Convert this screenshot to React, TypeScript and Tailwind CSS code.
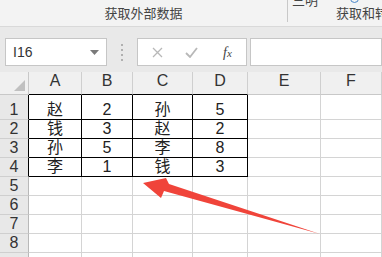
import React from "react"

const cols = [
  { name: "A", w: 53 },
  { name: "B", w: 51 },
  { name: "C", w: 60 },
  { name: "D", w: 55 },
  { name: "E", w: 73 },
  { name: "F", w: 61 },
]

const data = [
  ["赵", "2", "孙", "5"],
  ["钱", "3", "赵", "2"],
  ["孙", "5", "李", "8"],
  ["李", "1", "钱", "3"],
]

const rowHeights = [25, 19, 19, 19, 19, 19, 19, 19, 19]

export default function App() {
  return (
    <div className="relative w-[382px] h-[257px] overflow-hidden bg-white text-[#222]" style={{ fontFamily: '"Liberation Sans", "Noto Sans CJK SC", sans-serif' }}>
      {/* ribbon */}
      <div className="h-[27px] bg-[#f3f3f3] border-b border-[#d9d9d9] flex relative">
        <div className="w-[287px] shrink-0 flex items-end justify-center pb-[3px] text-[13px] text-[#444]">获取外部数据</div>
        <div className="w-px shrink-0 h-[22px] bg-[#c8c8c8]" />
        <div className="flex-1 min-w-0 flex flex-col pl-[48px]">
          <div className="h-[6px] relative">
            <span className="absolute -top-[9px] left-[-44px] text-[13px] text-[#444]">三明</span>
            <span className="absolute -top-[6px] left-[14px] w-[9px] h-[9px] rounded-full border border-[#4a86c8]" />
          </div>
          <div className="mt-auto pb-[3px] text-[13px] text-[#444] whitespace-nowrap">获取和转换</div>
        </div>
      </div>

      {/* formula bar */}
      <div className="h-[45px] bg-[#e9e9e9] flex items-start pt-[11px] pl-[5px]">
        <div className="w-[102px] shrink-0 h-[28px] bg-white border border-[#c6c6c6] flex items-center px-[7px] text-[14px] text-[#333]">
          <span className="flex-1">I16</span>
          <svg width="9" height="5" viewBox="0 0 9 5"><path d="M0 0h9L4.5 5z" fill="#7a7a7a" /></svg>
        </div>
        <div className="w-[30px] shrink-0 h-[28px] flex flex-col items-center justify-center gap-[3px]">
          <span className="w-[2px] h-[2px] bg-[#b0b0b0]" />
          <span className="w-[2px] h-[2px] bg-[#b0b0b0]" />
          <span className="w-[2px] h-[2px] bg-[#b0b0b0]" />
          <span className="w-[2px] h-[2px] bg-[#b0b0b0]" />
        </div>
        <div className="w-[110px] shrink-0 h-[28px] bg-white border border-[#c6c6c6] flex items-center">
          <svg className="ml-[14px]" width="11" height="11" viewBox="0 0 11 11"><path d="M1 1l9 9M10 1l-9 9" stroke="#b8b8b8" strokeWidth="1.3" /></svg>
          <svg className="ml-[22px]" width="13" height="11" viewBox="0 0 13 11"><path d="M1 6l4 4 7-9" stroke="#b8b8b8" strokeWidth="1.8" fill="none" /></svg>
          <span className="ml-[25px] text-[14px] italic text-[#444]" style={{ fontFamily: '"Liberation Serif", serif' }}>f<span className="text-[11px]">x</span></span>
        </div>
        <div className="ml-[3px] flex-1 h-[28px] bg-white border border-[#c6c6c6]" />
      </div>

      {/* sheet */}
      <div className="flex flex-col text-[16px]">
        <div className="flex h-[23px] bg-[#f0f0f0]">
          <div className="w-[29px] shrink-0 border-r border-b border-[#c8c8c8] relative">
            <svg className="absolute right-[3px] bottom-[3px]" width="11" height="11" viewBox="0 0 11 11"><path d="M11 0v11H0z" fill="#c0c0c0" /></svg>
          </div>
          {cols.map((c, i) => (
            <div
              key={c.name}
              style={{ width: c.w }}
              className={`shrink-0 flex items-end justify-center pb-[1px] text-[#333] border-r border-[#cfcfcf] border-b ${i < 4 ? "border-b-black" : "border-b-[#c8c8c8]"}`}
            >
              {c.name}
            </div>
          ))}
        </div>
        {rowHeights.map((h, r) => (
          <div key={r} className="flex" style={{ height: h }}>
            <div className={`w-[29px] shrink-0 bg-[#e8e8e8] border-b border-b-[#cfcfcf] border-r flex items-end justify-center text-[#333] leading-[19px] ${r < 4 ? "border-r-black" : "border-r-[#b8b8b8]"}`}>
              {r < 8 ? r + 1 : ""}
            </div>
            {cols.map((c, i) => {
              const inTable = r < 4 && i < 4
              return (
                <div
                  key={c.name}
                  style={{ width: c.w }}
                  className={`shrink-0 flex items-end justify-center leading-[19px] border-r border-b ${inTable ? "border-r-black border-b-black" : "border-r-[#d4d4d4] border-b-[#d4d4d4]"}`}
                >
                  {inTable ? data[r][i] : ""}
                </div>
              )
            })}
          </div>
        ))}
      </div>

      {/* red arrow */}
      <svg className="absolute left-0 top-0 pointer-events-none" width="382" height="257" viewBox="0 0 382 257">
        <polygon points="143,183 166,178 169,184 320,234 164,191 161,198" fill="#f0443a" />
      </svg>
    </div>
  )
}
